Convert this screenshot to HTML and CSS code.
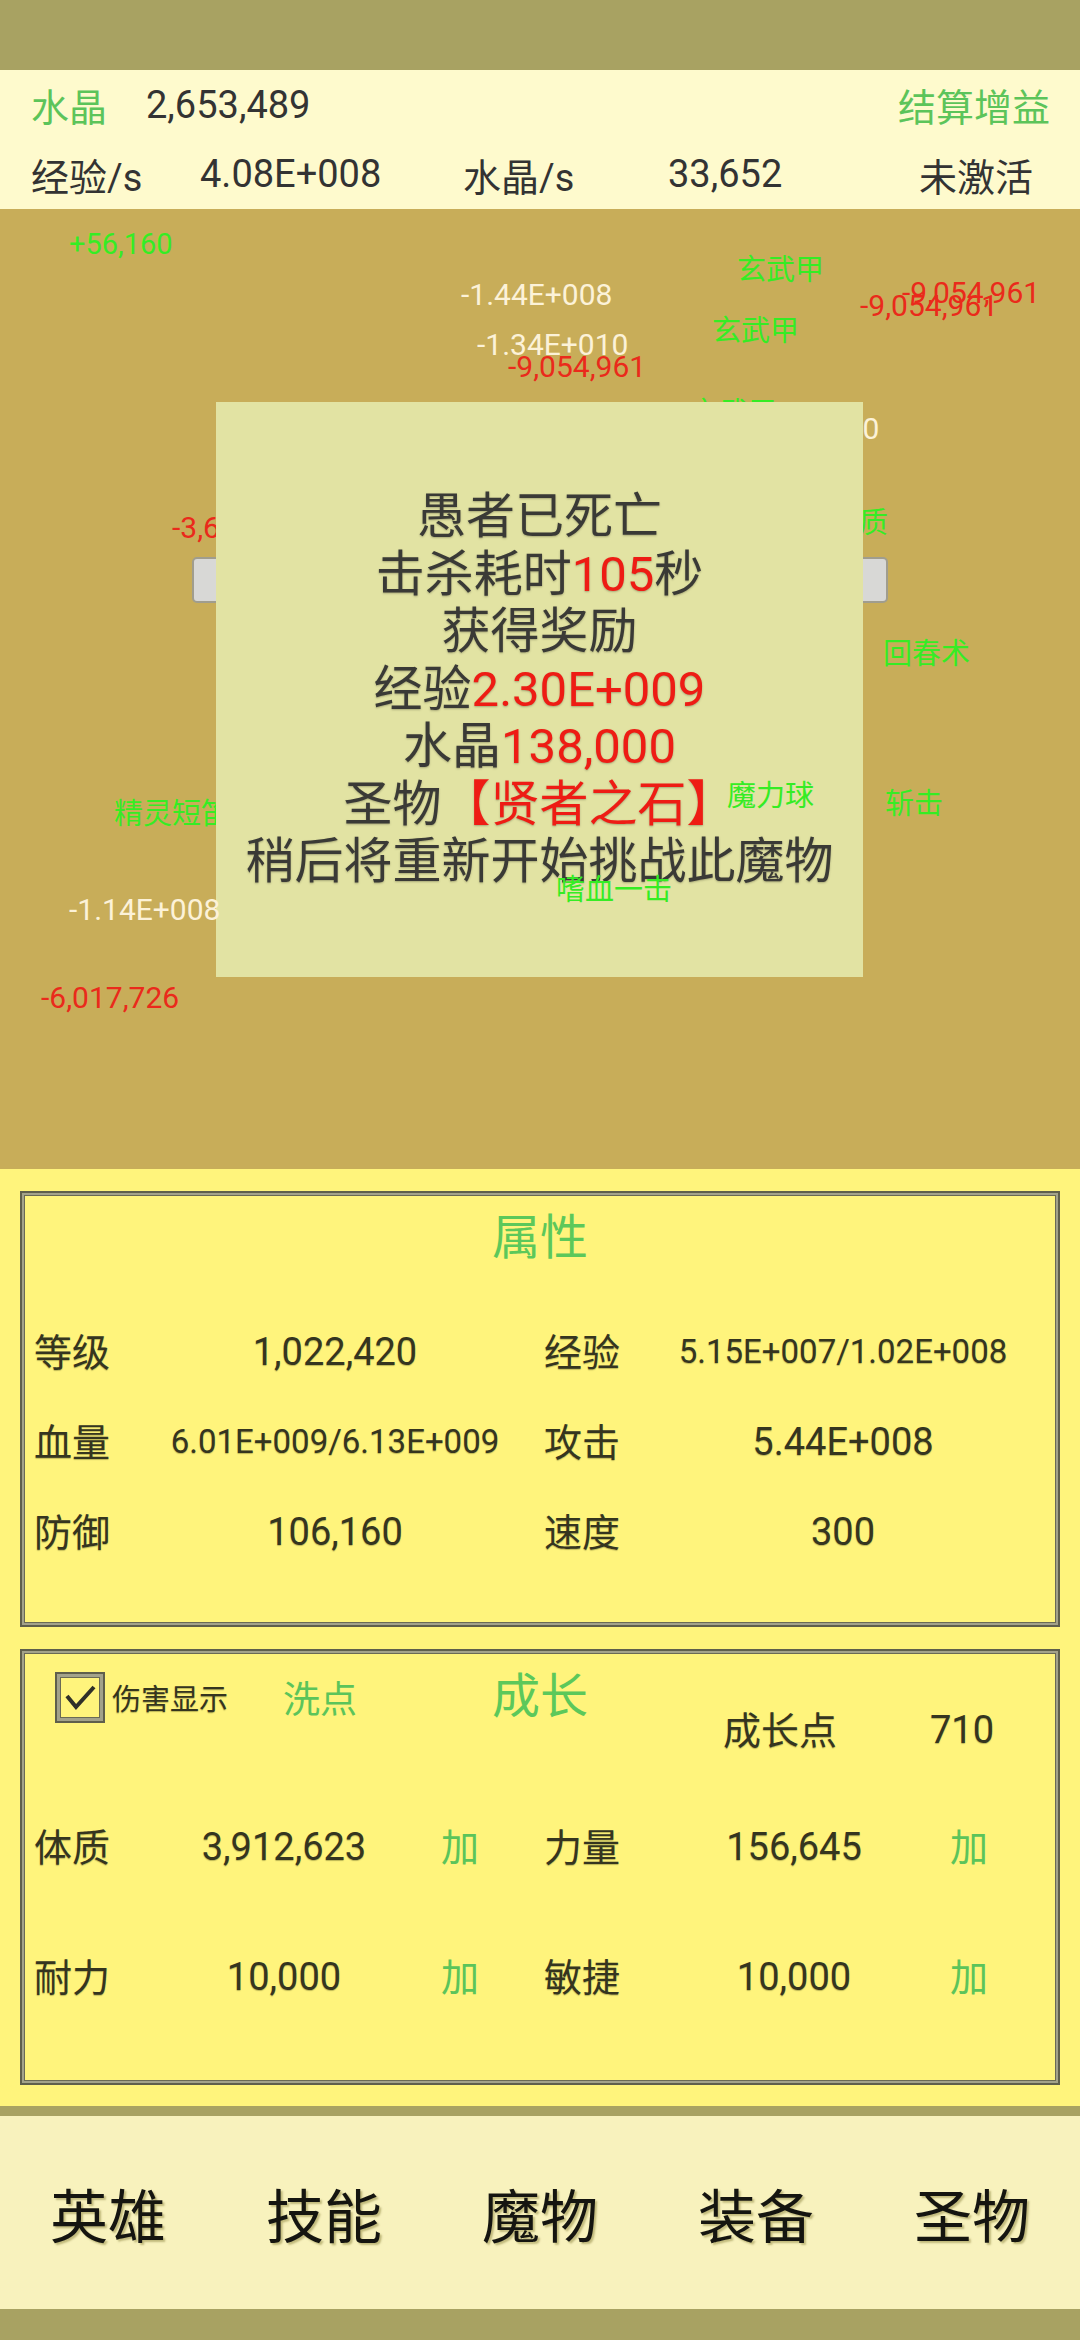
FILE: index.html
```html
<!DOCTYPE html>
<html lang="zh-CN">

<head>
    <meta charset="UTF-8">
    <meta name="viewport" content="width=device-width, initial-scale=1.0">
    <title>愚者挑战</title>
    <link rel="stylesheet" href="styles.css">
</head>

<body>
    <div class="screen">
        <div class="status-bar"></div>

        <header class="summary">
            <div class="summary-row">
                <span class="green">水晶</span>
                <span class="crystal">2,653,489</span>
                <span class="green bonus">结算增益</span>
            </div>
            <div class="summary-row rates">
                <span>经验/s</span>
                <span>4.08E+008</span>
                <span>水晶/s</span>
                <span>33,652</span>
                <span>未激活</span>
            </div>
        </header>

        <section class="battle">
            <span class="pop heal" style="left:69px;top:20px">+56,160</span>
            <span class="pop skill" style="left:737px;top:46px">玄武甲</span>
            <span class="pop hit" style="left:461px;top:71px">-1.44E+008</span>
            <span class="pop dmg" style="left:902px;top:69px">-9,054,961</span>
            <span class="pop dmg" style="left:860px;top:82px">-9,054,961</span>
            <span class="pop skill" style="left:712px;top:107px">玄武甲</span>
            <span class="pop hit" style="left:477px;top:121px">-1.34E+010</span>
            <span class="pop dmg" style="left:508px;top:143px">-9,054,961</span>
            <span class="pop skill" style="left:690px;top:189px">玄武甲</span>
            <span class="pop hit" style="left:728px;top:205px">-1.34E+010</span>
            <span class="pop skill" style="left:772px;top:299px">强壮体质</span>
            <span class="pop dmg" style="left:172px;top:304px">-3,671,240</span>
            <span class="pop skill" style="left:114px;top:590px">精灵短笛</span>

            <div class="hp-bar"></div>

            <div class="result">
                <p>愚者已死亡</p>
                <p>击杀耗时<em>105</em>秒</p>
                <p>获得奖励</p>
                <p>经验<em>2.30E+009</em></p>
                <p>水晶<em>138,000</em></p>
                <p>圣物<em>【贤者之石】</em></p>
                <p>稍后将重新开始挑战此魔物</p>
            </div>

            <span class="pop skill" style="left:883px;top:430px">回春术</span>
            <span class="pop skill" style="left:727px;top:572px">魔力球</span>
            <span class="pop skill" style="left:885px;top:580px">斩击</span>
            <span class="pop skill" style="left:556px;top:666px">嗜血一击</span>
            <span class="pop hit" style="left:69px;top:686px">-1.14E+008</span>
            <span class="pop dmg" style="left:41px;top:774px">-6,017,726</span>
        </section>

        <section class="panel">
            <div class="box attrs">
                <h2 class="box-title">属性</h2>
                <div class="stat-row">
                    <span>等级</span>
                    <span class="val">1,022,420</span>
                    <span class="label2">经验</span>
                    <span class="val small">5.15E+007/1.02E+008</span>
                </div>
                <div class="stat-row">
                    <span>血量</span>
                    <span class="val small">6.01E+009/6.13E+009</span>
                    <span class="label2">攻击</span>
                    <span class="val">5.44E+008</span>
                </div>
                <div class="stat-row">
                    <span>防御</span>
                    <span class="val">106,160</span>
                    <span class="label2">速度</span>
                    <span class="val">300</span>
                </div>
            </div>

            <div class="box growth">
                <div class="growth-head">
                    <div class="head-left">
                        <svg class="check" width="50" height="51" viewBox="0 0 50 51">
                            <rect x="1" y="1" width="48" height="49" fill="none" stroke="#5f5f4c" stroke-width="2" />
                            <rect x="3.5" y="3.5" width="43" height="44" fill="none" stroke="#a3a28a" stroke-width="3" />
                            <rect x="5.5" y="5.5" width="39" height="40" fill="none" stroke="#6a6a55" stroke-width="1" />
                            <path d="M12 24 L21 35 L39 15" fill="none" stroke="#303028" stroke-width="4" />
                        </svg>
                        <span class="dmg-toggle">伤害显示</span>
                        <span class="green reset">洗点</span>
                    </div>
                    <h2 class="box-title">成长</h2>
                    <div class="head-right">
                        <span>成长点</span>
                        <span class="points">710</span>
                    </div>
                </div>
                <div class="grow-row">
                    <span>体质</span>
                    <span class="val">3,912,623</span>
                    <span class="green add">加</span>
                    <span class="label2">力量</span>
                    <span class="val">156,645</span>
                    <span class="green add">加</span>
                </div>
                <div class="grow-row">
                    <span>耐力</span>
                    <span class="val">10,000</span>
                    <span class="green add">加</span>
                    <span class="label2">敏捷</span>
                    <span class="val">10,000</span>
                    <span class="green add">加</span>
                </div>
            </div>
        </section>

        <div class="divider"></div>

        <nav class="tabs">
            <span>英雄</span>
            <span>技能</span>
            <span>魔物</span>
            <span>装备</span>
            <span>圣物</span>
        </nav>

        <div class="nav-bar"></div>
    </div>
</body>

</html>
```

FILE: styles.css
```css
body {
    margin: 0;
    padding: 0;
    font-family: Roboto, "Noto Sans CJK SC", sans-serif;
    color: #333;
    background-color: #a8a262;
}

.screen {
    width: 1080px;
    height: 2340px;
    display: flex;
    flex-direction: column;
}

.status-bar {
    height: 70px;
    background-color: #a8a262;
}

.green {
    color: #5cc45a;
}

/* top summary */

.summary {
    height: 139px;
    background-color: #fefacd;
    font-size: 38px;
    color: #333;
}

.summary-row {
    height: 69px;
    display: flex;
    align-items: center;
    padding: 0 30px 0 31px;
}

.crystal {
    margin-left: 39px;
}

.bonus {
    margin-left: auto;
}

.rates {
    height: 70px;
    display: grid;
    grid-template-columns: 169px 263px 205px 251px auto;
}

/* battle canvas */

.battle {
    position: relative;
    height: 960px;
    background-color: #c8ad59;
    overflow: hidden;
}

.pop {
    position: absolute;
    font-size: 30px;
    line-height: 30px;
    white-space: nowrap;
}

.pop.skill,
.pop.heal {
    color: #35ec24;
    font-size: 29px;
}

.pop.dmg {
    color: #ea2a1b;
}

.pop.hit {
    color: #fcf2d8;
}

.hp-bar {
    position: absolute;
    left: 192px;
    top: 348px;
    width: 692px;
    height: 42px;
    background-color: #d8d8d6;
    border: 2px solid #a09d8e;
    border-radius: 5px;
}

.result {
    position: absolute;
    left: 216px;
    top: 193px;
    width: 647px;
    height: 575px;
    background-color: #e2e3a3;
    display: flex;
    flex-direction: column;
    justify-content: center;
    align-items: center;
    font-size: 49px;
    line-height: 57.5px;
    color: #3a3a36;
    text-shadow: 0 1px 2px rgba(60, 60, 40, 0.35);
}

.result p {
    margin: 0;
    white-space: nowrap;
}

.result em {
    font-style: normal;
    color: #ee1c14;
}

/* stat panels */

.panel {
    height: 894px;
    background-color: #fff47c;
    padding: 22px 20px 21px;
    display: flex;
    flex-direction: column;
    gap: 22px;
}

.box {
    height: 436px;
    box-sizing: border-box;
    border: 2px solid #5f5f4c;
    box-shadow: inset 0 0 0 2px #a3a28a, inset 0 0 0 3px #6a6a55;
    font-size: 38px;
    color: #35351f;
    text-shadow: 0 1px 1px rgba(90, 90, 30, 0.4);
}

.box-title {
    margin: 0;
    font-size: 48px;
    font-weight: normal;
    line-height: 60px;
    text-align: center;
    color: #5cc85a;
    text-shadow: none;
}

.attrs {
    padding-top: 15px;
}

.attrs .box-title {
    margin-bottom: 36px;
}

.stat-row {
    height: 90px;
    display: grid;
    grid-template-columns: 116px 370px 130px 386px;
    align-items: center;
    padding-left: 12px;
    white-space: nowrap;
}

.val {
    text-align: center;
    padding-top: 5px;
}

.val.small {
    font-size: 33px;
}

.label2 {
    padding-left: 24px;
}

.growth {
    padding-top: 16px;
}

.growth-head {
    height: 90px;
    margin-bottom: 22px;
    display: grid;
    grid-template-columns: 1fr auto 1fr;
    align-items: start;
}

.head-left {
    height: 60px;
    display: flex;
    align-items: center;
    padding-left: 33px;
}

.dmg-toggle {
    margin-left: 7px;
    font-size: 29px;
}

.reset {
    margin-left: 55px;
    font-size: 37px;
    text-shadow: none;
}

.head-right {
    margin-top: 30px;
    height: 60px;
    display: flex;
    align-items: center;
    padding-left: 135px;
}

.points {
    width: 150px;
    margin-left: 50px;
    padding-top: 5px;
    text-align: center;
}

.grow-row {
    height: 130px;
    display: grid;
    grid-template-columns: 116px 268px 84px 148px 288px 62px;
    align-items: center;
    padding-left: 12px;
    white-space: nowrap;
}

.grow-row .label2 {
    padding-left: 42px;
}

.add {
    text-align: center;
    text-shadow: none;
}

/* bottom navigation */

.divider {
    height: 10px;
    background-color: #a8a262;
}

.tabs {
    height: 193px;
    background-color: #f8f2bd;
    display: grid;
    grid-template-columns: repeat(5, 1fr);
    align-items: center;
    text-align: center;
    font-size: 58px;
    color: #151510;
    text-shadow: 2px 2px 2px rgba(90, 80, 0, 0.35);
}

.nav-bar {
    height: 31px;
    background-color: #a8a262;
}
```
